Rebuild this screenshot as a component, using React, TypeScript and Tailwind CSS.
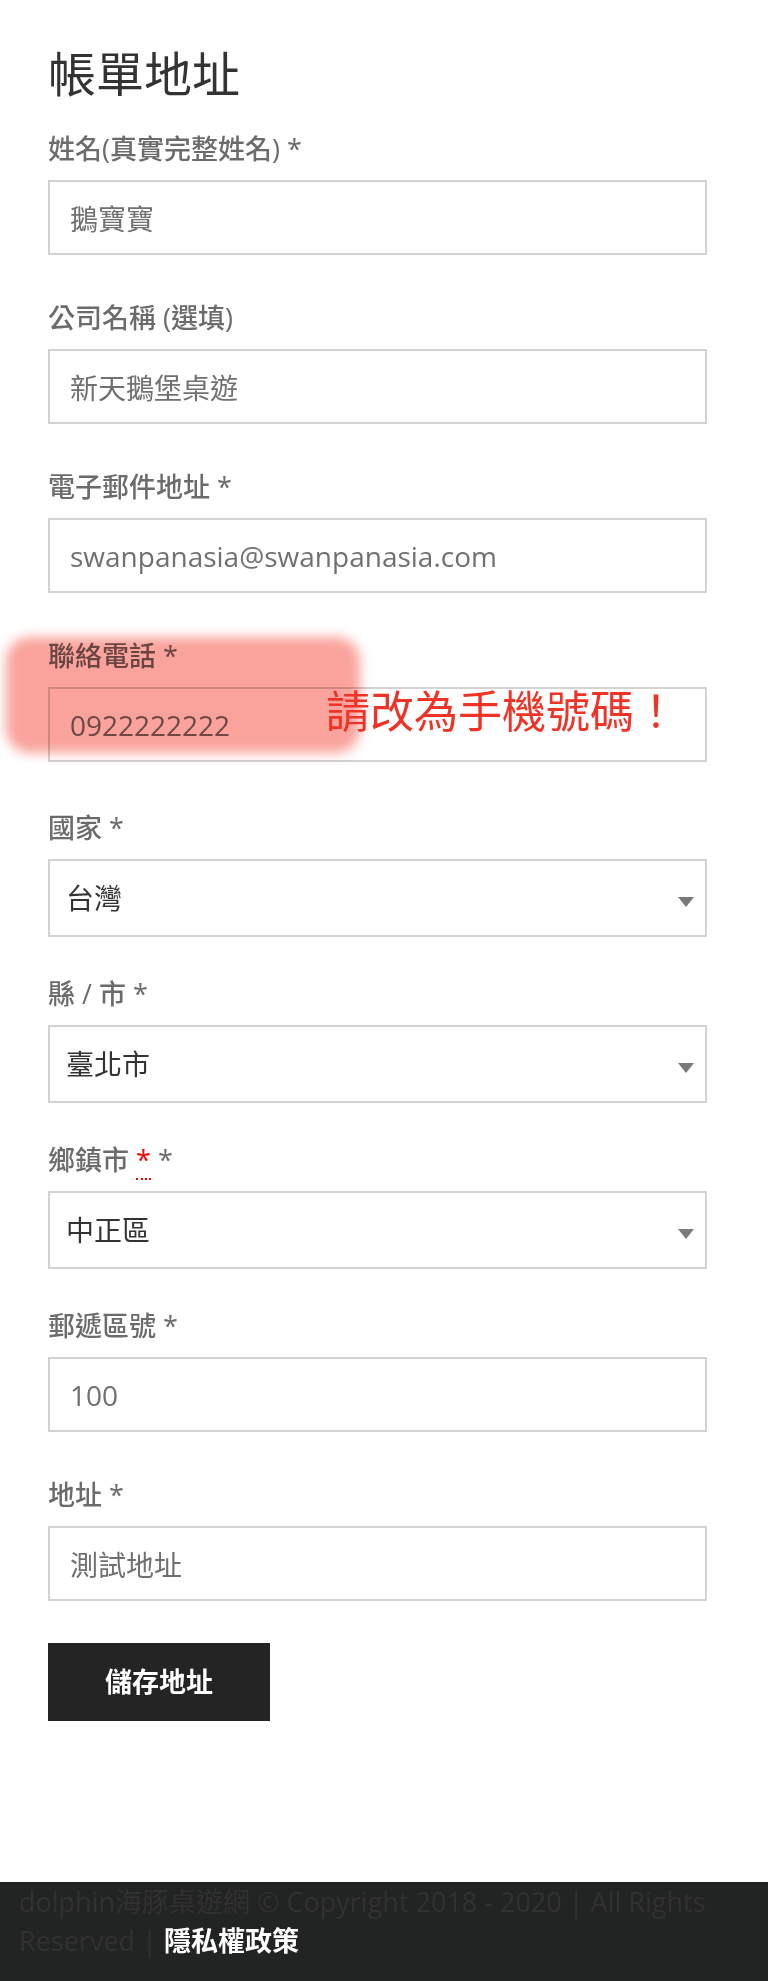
import React from 'react';

const FONT = "font-['Open_Sans','Noto_Sans_CJK_TC',sans-serif]";

interface FieldProps {
  label: React.ReactNode;
  value: string;
  className?: string;
  children?: React.ReactNode;
}

const Label: React.FC<{ children: React.ReactNode }> = ({ children }) => (
  <label className="block text-[27px] leading-[36px] font-medium text-[#6b6b6b] mb-[13px]">{children}</label>
);

/**
 * Plain text input row
 */
const TextField: React.FC<FieldProps> = ({ label, value, className = 'mb-[45px]', children }) => (
  <div className={`relative ${className}`}>
    <Label>{label}</Label>
    <input
      readOnly
      defaultValue={value}
      className="block w-full h-[75px] border-2 border-[#d3d3d3] bg-white px-[20px] text-[28px] text-[#707070] outline-none"
    />
    {children}
  </div>
);

/**
 * Select row with a small grey triangle on the right
 */
const SelectField: React.FC<FieldProps> = ({ label, value }) => (
  <div className="mb-[39px]">
    <Label>{label}</Label>
    <div className="relative">
      <select
        defaultValue={value}
        className="block w-full h-[78px] appearance-none border-2 border-[#d3d3d3] bg-white pl-[16px] pr-[48px] text-[28px] text-[#333] outline-none"
      >
        <option value={value}>{value}</option>
      </select>
      <svg
        className="absolute right-[13px] top-[38px] pointer-events-none"
        width="16"
        height="10"
        viewBox="0 0 16 10"
      >
        <polygon points="0,0 16,0 8,10" fill="#7a7a7a" />
      </svg>
    </div>
  </div>
);

export default function App() {
  return (
    <div className={`${FONT} bg-white min-h-[1981px] flex flex-col`}>
      <main className="flex-1 pl-[48px] pr-[61px] pt-[44px]">
        <h2 className="text-[48px] leading-[60px] text-[#333] mb-[27px]">帳單地址</h2>

        <TextField label="姓名(真實完整姓名) *" value="鵝寶寶" />
        <TextField label="公司名稱 (選填)" value="新天鵝堡桌遊" />
        <TextField label="電子郵件地址 *" value="swanpanasia@swanpanasia.com" />

        {/* Phone with highlight note */}
        <TextField label="聯絡電話 *" value="0922222222" className="mb-[48px]">
          <div className="absolute left-[-42px] top-[-1px] w-[354px] h-[116px] rounded-[24px] bg-[#f9a39c] blur-[6px] mix-blend-multiply pointer-events-none" />
          <span className="absolute left-[278px] top-[43px] text-[44px] leading-[56px] text-[#ef3327] font-['Noto_Sans_CJK_TC',sans-serif] whitespace-nowrap">
            請改為手機號碼！
          </span>
        </TextField>

        <SelectField label="國家 *" value="台灣" />
        <SelectField label="縣 / 市 *" value="臺北市" />
        <SelectField
          label={
            <>
              鄉鎮市{' '}
              <abbr className="text-[#ff0000] no-underline border-b-2 border-dotted border-[#ff0000]">*</abbr> *
            </>
          }
          value="中正區"
        />

        <TextField label="郵遞區號 *" value="100" />
        <TextField label="地址 *" value="測試地址" className="mb-[42px]" />

        <button className="w-[222px] h-[78px] bg-[#242424] text-white text-[27px] font-semibold">
          儲存地址
        </button>
      </main>

      <footer className="bg-[#222323] px-[19px] pb-[21px] text-[27px] leading-[39px] text-[#313131]">
        dolphin海豚桌遊網 © Copyright 2018 - 2020 | All Rights
        <br />
        Reserved | <a className="text-white font-bold">隱私權政策</a>
      </footer>
    </div>
  );
}
